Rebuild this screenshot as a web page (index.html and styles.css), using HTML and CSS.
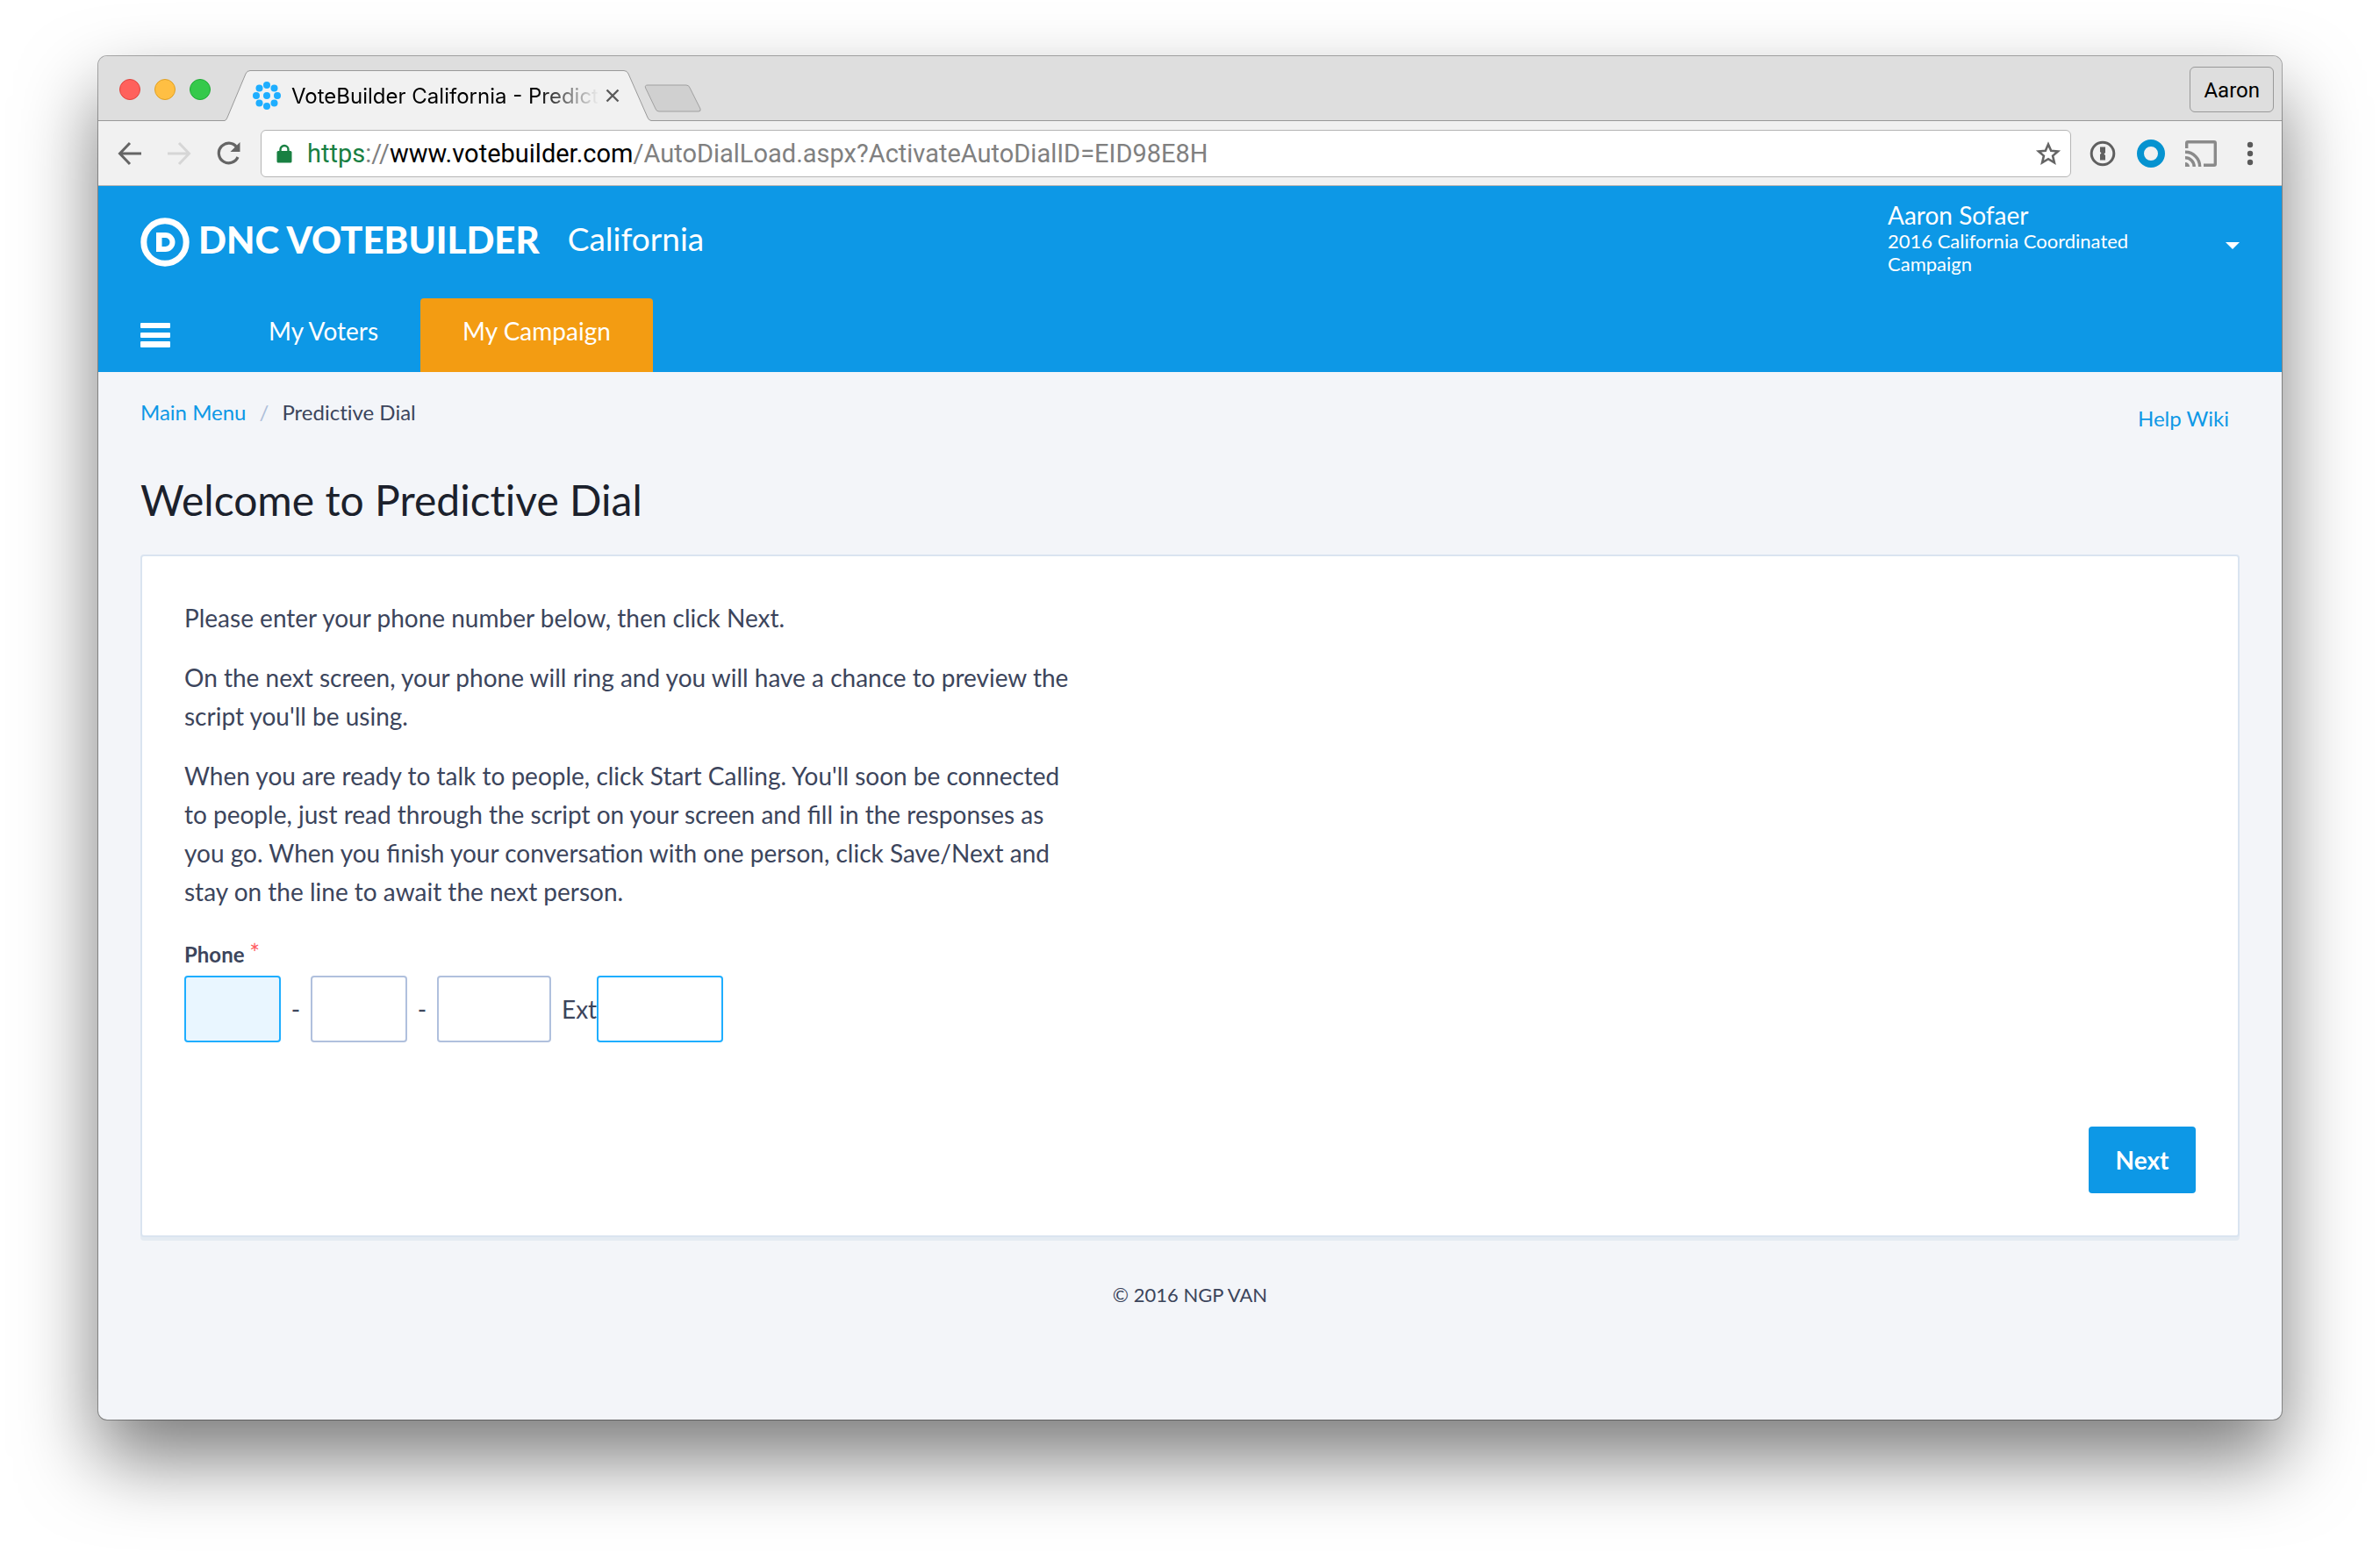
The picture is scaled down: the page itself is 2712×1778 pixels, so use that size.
FILE: index.html
```html
<!DOCTYPE html>
<html lang="en">
<head>
<meta charset="utf-8">
<title>VoteBuilder California - Predictive Dial</title>
<link rel="stylesheet" href="styles.css">
</head>
<body>
<div class="window">
  <div class="titlebar">
    <div class="lights">
      <button class="light light-close" aria-label="Close"></button>
      <button class="light light-min" aria-label="Minimize"></button>
      <button class="light light-max" aria-label="Zoom"></button>
    </div>
    <div class="tab">
      <svg class="tab-shape" viewBox="0 0 486 58" aria-hidden="true"><path d="M0 58V57.500Q2 57 3 54L24 4Q25.500 .500 29 .500H455Q458.500 .500 460 4L482 54Q483 57 486 57.500V58Z" fill="#f1f1f1"/><path d="M0 57.500Q2 57 3 54L24 4Q25.500 .500 29 .500H455Q458.500 .500 460 4L482 54Q483 57 486 57.500" fill="none" stroke="#999"/></svg>
      <svg class="favicon" viewBox="0 0 32 32" fill="#1eaeff" aria-hidden="true"><circle cx="16" cy="16" r="4"/><circle cx="16" cy="4" r="4"/><circle cx="16" cy="28" r="4"/><circle cx="4" cy="16" r="4"/><circle cx="28" cy="16" r="4"/><circle cx="7.500" cy="7.500" r="4"/><circle cx="24.500" cy="7.500" r="4"/><circle cx="7.500" cy="24.500" r="4"/><circle cx="24.500" cy="24.500" r="4"/></svg>
      <span class="tab-title">VoteBuilder California - Predict</span>
      <button class="tab-close" aria-label="Close tab"><svg width="16" height="16" viewBox="0 0 16 16"><path d="M1.500 1.500l13 13M14.500 1.500l-13 13" stroke="#5a5a5a" stroke-width="2.400"/></svg></button>
    </div>
    <button class="new-tab" aria-label="New tab"><svg width="66" height="33" viewBox="0 0 66 33"><path d="M4 1H48Q51 1 52 4L64 28Q65 31 62 31H17Q14 31 13 28L1.500 4Q.500 1 4 1Z" fill="#d0d0d0" stroke="#a0a0a0"/></svg></button>
    <button class="profile">Aaron</button>
  </div>
  <div class="toolbar">
    <button class="tool" aria-label="Back"><svg width="28" height="28" viewBox="0 0 28 28"><path d="M27 14H3M14 2L2.500 14L14 26" fill="none" stroke="#656565" stroke-width="3"/></svg></button>
    <button class="tool" aria-label="Forward"><svg width="28" height="28" viewBox="0 0 28 28"><path d="M1 14H25M14 2L25.500 14L14 26" fill="none" stroke="#d6d6d6" stroke-width="3"/></svg></button>
    <button class="tool" aria-label="Reload"><svg width="28" height="28" viewBox="0 0 28 28"><path d="M23.500 6.500A11.300 11.300 0 1 0 25 18" fill="none" stroke="#656565" stroke-width="3.200"/><path d="M27.500 1V12H16.500Z" fill="#656565"/></svg></button>
    <div class="omnibox">
      <svg class="lock" viewBox="0 0 18 22" aria-hidden="true"><path d="M4.500 9V6.500a4.500 4.500 0 0 1 9 0V9" fill="none" stroke="#188042" stroke-width="2.400"/><rect x=".5" y="8" width="17" height="13.500" rx="1.500" fill="#188042"/></svg>
      <div class="url"><span class="secure">https</span>://<span class="host">www.votebuilder.com</span>/AutoDialLoad.aspx?ActivateAutoDialID=EID98E8H</div>
      <button class="star" aria-label="Bookmark"><svg width="30" height="28" viewBox="0 0 30 28"><path d="M15 3.500L18.200 10.700L26 11.400L20.100 16.600L21.900 24.300L15 20.200L8.100 24.300L9.900 16.600L4 11.400L11.800 10.700Z" fill="none" stroke="#656565" stroke-width="2.600"/></svg></button>
    </div>
    <button class="ext" aria-label="Password manager"><svg width="32" height="32" viewBox="0 0 32 32"><circle cx="16" cy="16" r="12.800" fill="none" stroke="#5f5f5f" stroke-width="3"/><path d="M13 8.500H19V15L17.500 16.500L19 18V23.500H13V17L14.500 15.500L13 14Z" fill="#5f5f5f"/></svg></button>
    <button class="ext" aria-label="Extension"><svg width="32" height="32" viewBox="0 0 32 32"><circle cx="16" cy="16" r="12" fill="#f1f1f1" stroke="#0693d0" stroke-width="8"/></svg></button>
    <button class="ext" aria-label="Cast"><svg width="36" height="30" viewBox="0 0 36 30" fill="none" stroke="#8a8a8a" stroke-width="3.400"><path d="M1.700 9V3Q1.700 1.700 3 1.700H33Q34.300 1.700 34.300 3V27Q34.300 28.300 33 28.300H21M0 13.300A16.700 16.700 0 0 1 16.700 30M0 19.800A10.200 10.200 0 0 1 10.200 30"/><path d="M0 25A5 5 0 0 1 5 30H0Z" fill="#8a8a8a" stroke="none"/></svg></button>
    <button class="menu" aria-label="Browser menu"><svg width="8" height="28" viewBox="0 0 8 28" fill="#5a5a5a"><circle cx="4" cy="4" r="3.200"/><circle cx="4" cy="14" r="3.200"/><circle cx="4" cy="24" r="3.200"/></svg></button>
  </div>

  <header class="header">
    <div class="brand-row">
      <a class="brand" href="#">
        <svg class="logo" viewBox="0 0 56 56" aria-hidden="true"><circle cx="28" cy="28" r="24.200" fill="none" stroke="#fff" stroke-width="7"/><path fill="#fff" fill-rule="evenodd" d="M18 17H28.500A11 11 0 0 1 28.500 39H18ZM24.500 23V33H28.500A5 5 0 0 0 28.500 23Z"/></svg>
        <span class="brand-name">DNC VOTEBUILDER</span>
        <span class="brand-state">California</span>
      </a>
      <button class="user">
        <span class="user-text"><span class="user-name">Aaron Sofaer</span><span class="user-committee">2016 California Coordinated Campaign</span></span>
        <svg class="caret" viewBox="0 0 16 8" aria-hidden="true"><path d="M0 0H16L8 8Z" fill="#fff"/></svg>
      </button>
    </div>
    <nav class="nav">
      <button class="burger" aria-label="Menu"><svg width="34" height="28" viewBox="0 0 34 28" fill="#fff"><rect width="34" height="6" rx="1"/><rect y="11" width="34" height="6" rx="1"/><rect y="21" width="34" height="7" rx="1"/></svg></button>
      <a class="nav-link" href="#">My Voters</a>
      <a class="nav-link active" href="#">My Campaign</a>
    </nav>
  </header>

  <main class="page">
    <div class="crumb-row">
      <nav class="crumbs"><a href="#">Main Menu</a><span class="slash">/</span><span>Predictive Dial</span></nav>
      <a class="help" href="#">Help Wiki</a>
    </div>
    <h1>Welcome to Predictive Dial</h1>
    <form class="card">
      <div class="intro">
        <p>Please enter your phone number below, then click Next.</p>
        <p>On the next screen, your phone will ring and you will have a chance to preview the script you'll be using.</p>
        <p>When you are ready to talk to people, click Start Calling. You'll soon be connected to people, just read through the script on your screen and fill in the responses as you go. When you finish your conversation with one person, click Save/Next and stay on the line to await the next person.</p>
      </div>
      <label class="label" for="area">Phone <span class="required">*</span></label>
      <div class="phone">
        <input class="field focused" id="area" type="tel">
        <span class="dash">-</span>
        <input class="field" type="tel" aria-label="Prefix">
        <span class="dash">-</span>
        <input class="field field-line" type="tel" aria-label="Line number">
        <label class="ext-label" for="extn">Ext</label>
        <input class="field field-ext" id="extn" type="tel">
      </div>
      <div class="actions"><button class="next" type="button">Next</button></div>
    </form>
    <footer class="footer">© 2016 NGP VAN</footer>
  </main>
</div>
</body>
</html>
```
FILE: styles.css
```css
* { box-sizing: border-box; }

body {
  margin: 0;
  min-height: 100vh;
  padding: 64px 112px 160px;
  display: flex;
  flex-direction: column;
  background: #fff;
  color: #3c455c;
  font: 28px/44px Lato, "Liberation Sans", sans-serif;
}

button {
  margin: 0;
  padding: 0;
  border: 0;
  background: none;
  font: inherit;
  color: inherit;
}

svg { display: block; flex: none; }
a { color: #0d98e6; text-decoration: none; }

.window {
  flex: 1;
  display: flex;
  flex-direction: column;
  border-radius: 10px;
  background: #f3f5f9;
  box-shadow: 0 0 0 1px rgba(0, 0, 0, .32), 0 44px 88px rgba(0, 0, 0, .52);
}

/* Browser chrome */
.titlebar {
  display: flex;
  align-items: flex-end;
  height: 74px;
  padding-right: 9px;
  border-bottom: 1px solid #999;
  border-radius: 10px 10px 0 0;
  background: #dedede;
  font: 24px/32px Inter, sans-serif;
  color: #000;
}

.lights { display: flex; gap: 16px; padding: 0 16px 23px 24px; }
.light { width: 24px; height: 24px; border: 1px solid; border-radius: 50%; }
.light-close { background: #ff615c; border-color: #e0443e; }
.light-min { background: #ffbf43; border-color: #dfa023; }
.light-max { background: #35c94b; border-color: #1fab35; }

.tab {
  position: relative;
  display: flex;
  align-items: center;
  width: 486px;
  height: 58px;
  margin-bottom: -1px;
  padding: 0 36px 0 32px;
}
.tab-shape { position: absolute; inset: 0; width: 100%; height: 100%; }
.favicon { position: relative; width: 32px; height: 32px; }
.tab-title {
  position: relative;
  flex: 1;
  min-width: 0;
  margin-left: 12px;
  padding-top: 2px;
  white-space: nowrap;
  -webkit-mask-image: linear-gradient(to right, #000 78%, transparent 98%);
  mask-image: linear-gradient(to right, #000 78%, transparent 98%);
}
.tab-close { position: relative; }
.new-tab { margin: 0 auto 8px -8px; }
.profile {
  height: 52px;
  margin-bottom: 9px;
  padding: 2px 15px 0;
  border: 1px solid #999;
  border-radius: 6px;
  font-family: Roboto, sans-serif;
}

.toolbar {
  display: flex;
  align-items: center;
  height: 74px;
  padding: 0 32px 0 22px;
  border-bottom: 1px solid #b5b5b5;
  background: #f1f1f1;
}
.tool { margin-right: 28px; }
.omnibox {
  flex: 1;
  display: flex;
  align-items: center;
  height: 54px;
  margin: 0 20px 0 -5px;
  padding: 0 10px 0 17px;
  border: 1px solid #b5b5b5;
  border-radius: 6px;
  background: #fff;
}
.lock { width: 18px; height: 22px; }
.url { flex: 1; margin-left: 17px; font: 29px/36px Roboto, sans-serif; color: #808080; }
.secure { color: #188042; }
.host { color: #000; }
.ext { margin-right: 23px; }
.menu { margin-left: 11px; }

/* Site header */
.header { padding: 0 48px; background: #0d98e6; color: #fff; }
.brand-row { display: flex; align-items: center; justify-content: space-between; height: 128px; }
.brand { display: flex; align-items: center; color: #fff; }
.logo { width: 56px; height: 56px; }
.brand-name { margin-left: 10px; padding-bottom: 6px; font-size: 42px; font-weight: 900; }
.brand-state { margin-left: 32px; padding-bottom: 8px; font-size: 37px; }
.user {
  align-self: flex-start;
  display: flex;
  align-items: center;
  justify-content: space-between;
  width: 401px;
  padding-top: 16px;
  text-align: left;
}
.user-text { width: 290px; }
.user-name { display: block; line-height: 34px; }
.user-committee { display: block; font-size: 22px; line-height: 26px; }
.caret { width: 16px; height: 8px; margin-top: 18px; }

.nav { display: flex; height: 84px; }
.burger { margin-right: 64px; }
.nav-link { padding: 15px 48px 0; border-radius: 4px 4px 0 0; color: #fff; }
.active { background: #f39c12; }

/* Page */
.page { padding: 0 48px; }
.crumb-row { display: flex; justify-content: space-between; padding-top: 24px; font-size: 24px; }
.crumbs, h1 { font-variant-ligatures: none; }
.slash { margin: 0 15px; color: #aebfda; }
.help { padding: 7px 12px 0; }
h1 { margin: 39px 0 30px; font-size: 48px; line-height: 64px; font-weight: 400; color: #1b212c; }

.card {
  padding: 48px;
  border: 2px solid #dae4f0;
  border-radius: 4px;
  background: #fff;
  box-shadow: 0 4px 0 #e4ebf2;
}
.intro { max-width: 1020px; }
p { margin: 0 0 24px; }
.label { display: block; padding-top: 4px; font-size: 24px; font-weight: 700; }
.required { color: #ff5a5f; font-size: 28px; font-weight: 400; line-height: 20px; }
.phone { display: flex; align-items: center; margin-top: 2px; }
.field {
  width: 110px;
  height: 76px;
  padding: 0 12px;
  border: 2px solid #b0c0dd;
  border-radius: 4px;
  background: #fff;
  font: inherit;
  color: inherit;
}
.focused { border-color: #1eaeff; background: #e9f6ff; }
.dash { width: 34px; text-align: center; }
.field-line { width: 130px; }
.ext-label { margin-left: 12px; }
.field-ext { width: 144px; border-color: #1eaeff; }
.actions { display: flex; justify-content: flex-end; margin-top: 96px; }
.next {
  width: 122px;
  height: 76px;
  border-radius: 4px;
  background: #0d98e6;
  color: #fff;
  font-weight: 700;
}
.footer { padding: 44px 0; text-align: center; font-size: 22px; }
```
